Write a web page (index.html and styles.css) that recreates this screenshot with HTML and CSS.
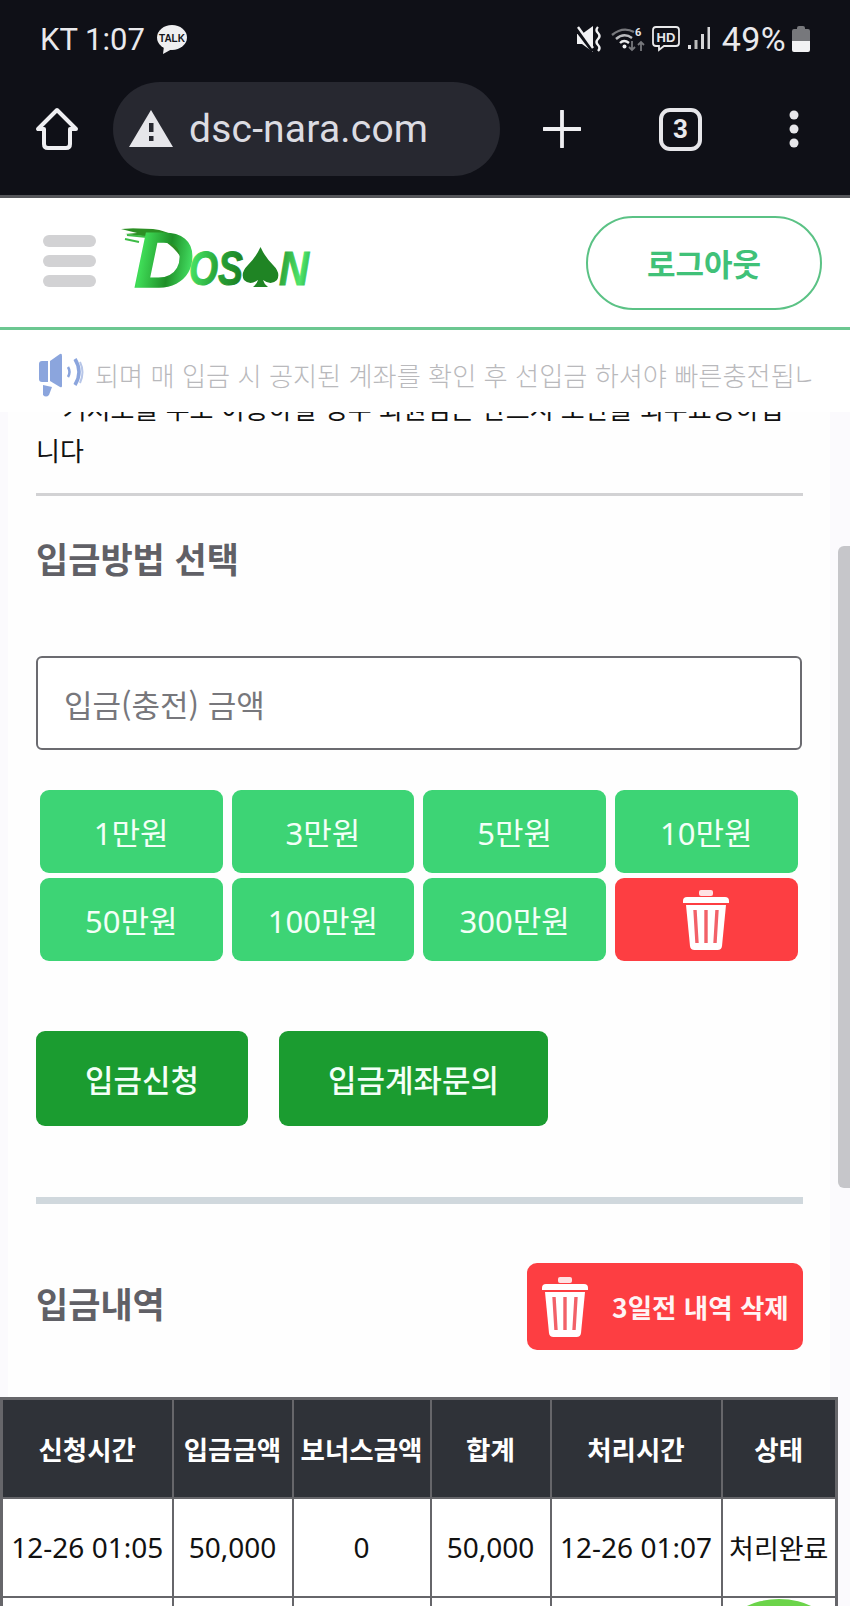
FILE: index.html
```html
<!DOCTYPE html>
<html lang="ko">
<head>
<meta charset="utf-8">
<title>입금 신청</title>
<link rel="stylesheet" href="styles.css">
</head>
<body>
<svg class="defs" width="0" height="0" aria-hidden="true">
  <symbol id="trash" viewBox="0 0 48 60">
    <rect x="17" y="0" width="14" height="6" rx="2" fill="#fff" opacity=".85"/>
    <path d="M1 11q0-4 4-4h38q4 0 4 4v2H1z" fill="#fff"/>
    <path d="M4 15h40l-4 41q-.4 4-4.500 4h-23q-4.100 0-4.500-4z" fill="#fff"/>
    <path d="M13 20l2 33M24 20v33M35 20l-2 33" stroke="#f26168" stroke-width="3.400" fill="none"/>
  </symbol>
</svg>

<div class="device-bar">
  <div class="status">
    <div class="status-left">
      <span>KT 1:07</span>
      <svg class="talk" width="30" height="29" viewBox="0 0 30 29">
        <ellipse cx="15" cy="12.500" rx="15" ry="12.500" fill="#efeff1"/>
        <path d="M7 21l-1 8 9-5z" fill="#efeff1"/>
        <text x="15" y="16.500" text-anchor="middle" class="talk-label">TALK</text>
      </svg>
    </div>
    <div class="status-right">
      <svg width="24" height="26" viewBox="0 0 24 26">
        <path d="M0 8h5l11-8v26L5 18H0z" fill="#f2f2f4"/>
        <path d="M0 4l16 21" stroke="#0f1017" stroke-width="4"/>
        <path d="M1 1l15 21" stroke="#f2f2f4" stroke-width="2.400"/>
        <path d="M21 1q-3 3 0 6t0 6 0 6 0 6" stroke="#f2f2f4" stroke-width="2.400" fill="none"/>
      </svg>
      <svg class="wifi" width="34" height="26" viewBox="0 0 34 26">
        <path d="M1 9q11-9 22-3" stroke="#77787c" stroke-width="2.400" fill="none"/>
        <path d="M5 13q8-7 16-1" stroke="#b9babd" stroke-width="2.400" fill="none"/>
        <path d="M9 17q4-4 9 0" stroke="#e8e8ea" stroke-width="2.400" fill="none"/>
        <circle cx="13.500" cy="20.500" r="2" fill="#f2f2f4"/>
        <text x="24" y="10" class="wifi-gen">6</text>
        <path d="M21 15v9m-3-3l3 3 3-3" stroke="#77787c" stroke-width="1.800" fill="none"/>
        <path d="M30 25v-9m-3 3l3-3 3 3" stroke="#77787c" stroke-width="1.800" fill="none"/>
      </svg>
      <svg class="hd" width="28" height="26" viewBox="0 0 28 26">
        <path d="M4 1h20q3 0 3 3v13q0 3-3 3H12l-5 4v-4H4q-3 0-3-3V4q0-3 3-3z" fill="none" stroke="#e8e8ea" stroke-width="1.800"/>
        <text x="14" y="16" text-anchor="middle" class="hd-label">HD</text>
      </svg>
      <svg class="signal" width="24" height="26" viewBox="0 0 24 26">
        <rect x="1" y="19" width="3" height="4" fill="#e0e0e2"/>
        <rect x="7.500" y="14" width="3" height="9" fill="#bbb"/>
        <rect x="14" y="8" width="3" height="15" fill="#d6d6d8"/>
        <rect x="20.500" y="1" width="2.500" height="22" fill="#d6d6d8"/>
      </svg>
      <span class="battery-pct">49%</span>
      <svg class="battery" width="18" height="26" viewBox="0 0 18 26">
        <path d="M5 2q0-2 2-2h4q2 0 2 2v1h3q2 0 2 2v10H0V5q0-2 2-2h3z" fill="#77787c"/>
        <path d="M0 15h18v9q0 2-2 2H2q-2 0-2-2z" fill="#f2f2f4"/>
      </svg>
    </div>
  </div>
  <div class="toolbar">
    <svg class="home" width="44" height="44" viewBox="0 0 44 44">
      <path d="M22 3L3 22h6v15q0 4 4 4h18q4 0 4-4V22h6z" fill="none" stroke="#efeff2" stroke-width="4" stroke-linejoin="round"/>
    </svg>
    <div class="omnibox">
      <svg width="44" height="38" viewBox="0 0 44 38">
        <path d="M22 0l22 37H0z" fill="#e6e6ea"/>
        <rect x="20" y="13" width="4.500" height="9" fill="#272830"/>
        <rect x="20" y="26" width="4.500" height="5" fill="#272830"/>
      </svg>
      <span class="url">dsc-nara.com</span>
    </div>
    <svg class="plus" width="38" height="38" viewBox="0 0 38 38">
      <path d="M19 1v36M1 19h36" stroke="#efeff2" stroke-width="3.800" stroke-linecap="round"/>
    </svg>
    <span class="tabs">3</span>
    <svg class="kebab" width="10" height="38" viewBox="0 0 10 38">
      <circle cx="5" cy="5" r="4.500" fill="#e6e6ea"/>
      <circle cx="5" cy="19" r="4.500" fill="#e6e6ea"/>
      <circle cx="5" cy="33" r="4.500" fill="#e6e6ea"/>
    </svg>
  </div>
</div>

<header class="site-header">
  <div class="hamburger"><i></i><i></i><i></i></div>
  <svg class="logo" width="210" height="80" viewBox="0 0 210 80">
    <defs>
      <linearGradient id="brush" gradientUnits="userSpaceOnUse" x1="10" y1="0" x2="205" y2="30">
        <stop offset="0" stop-color="#1c8a22"/>
        <stop offset=".14" stop-color="#3fdc57"/>
        <stop offset=".28" stop-color="#1f8f28"/>
        <stop offset=".4" stop-color="#44e063"/>
        <stop offset=".52" stop-color="#2aa83a"/>
        <stop offset=".68" stop-color="#1a7a1f"/>
        <stop offset=".82" stop-color="#23932d"/>
        <stop offset=".95" stop-color="#4fe66c"/>
        <stop offset="1" stop-color="#2eb046"/>
      </linearGradient>
    </defs>
    <path d="M13 13l30 1q26 3 36 24l-9 3q-12-17-29-19l-26-3 12-1-16-4 12-.5z" fill="#2c8f24"/>
    <path d="M15 24l14 3M17 20l20 2" stroke="#3dbb46" stroke-width="2" fill="none"/>
    <text x="24" y="72" class="logo-d" textLength="60" lengthAdjust="spacingAndGlyphs" fill="url(#brush)" stroke="url(#brush)" stroke-width="1.500">D</text>
    <text x="79" y="70" class="logo-os" textLength="54" lengthAdjust="spacingAndGlyphs" fill="url(#brush)" stroke="url(#brush)" stroke-width="1">OS</text>
    <path d="M150.500 32Q155 42 163 50Q171 58 167 65Q161 71 153 65Q154 69 158 72H143Q147 69 148 65Q140 71 134 65Q130 58 138 50Q146 42 150.500 32Z" fill="#1f8424"/>
    <text x="169" y="70" class="logo-n" textLength="30" lengthAdjust="spacingAndGlyphs" fill="url(#brush)" stroke="url(#brush)" stroke-width="1">N</text>
  </svg>
  <a class="logout">로그아웃</a>
</header>

<div class="ticker">
  <svg width="48" height="44" viewBox="0 0 48 44">
    <path d="M1 11q0-3 3-3h6v21H4q-3 0-3-3z" fill="#8ba5dd"/>
    <path d="M12 8l10-7q2-1 2 2v30q0 2-2 1l-10-6z" fill="#8ba5dd"/>
    <path d="M5 32l9 2-3 8q-3 3-6 0z" fill="#8ba5dd"/>
    <path d="M30 14q3 5 0 10" stroke="#8ba5dd" stroke-width="2.500" fill="none"/>
    <path d="M37 6q8 13 0 26" stroke="#8ba5dd" stroke-width="3.500" fill="none"/>
    <path d="M42 9q5 10 0 21" stroke="#b7c6e8" stroke-width="2" fill="none"/>
  </svg>
  <div class="ticker-text"><span>되며 매 입금 시 공지된 계좌를 확인 후 선입금 하셔야 빠른충전됩니다</span></div>
</div>

<main class="page">
  <div class="sheet">
    <p class="notice">*&nbsp; 거처모를 부모 이용하실 경우 회원님은 반드시 보안을 회수요망하십니다</p>
    <hr class="rule">
    <h2 class="method-title">입금방법 선택</h2>
    <div class="amount-input">입금(충전) 금액</div>
    <div class="quick-grid">
      <button class="quick">1만원</button>
      <button class="quick">3만원</button>
      <button class="quick">5만원</button>
      <button class="quick">10만원</button>
      <button class="quick">50만원</button>
      <button class="quick">100만원</button>
      <button class="quick">300만원</button>
      <button class="quick quick-clear"><svg width="48" height="60"><use href="#trash"/></svg></button>
    </div>
    <div class="actions">
      <button class="action action-apply">입금신청</button>
      <button class="action action-ask">입금계좌문의</button>
    </div>
    <hr class="rule-thick">
    <div class="history-head">
      <h2 class="history-title">입금내역</h2>
      <button class="purge"><svg width="48" height="60"><use href="#trash"/></svg><span>3일전 내역 삭제</span></button>
    </div>
  </div>
  <table class="history">
    <colgroup>
      <col class="c1"><col class="c2"><col class="c3"><col class="c4"><col class="c5"><col class="c6">
    </colgroup>
    <thead>
      <tr><th>신청시간</th><th>입금금액</th><th>보너스금액</th><th>합계</th><th>처리시간</th><th>상태</th></tr>
    </thead>
    <tbody>
      <tr><td>12-26 01:05</td><td>50,000</td><td>0</td><td>50,000</td><td>12-26 01:07</td><td class="state">처리완료</td></tr>
      <tr><td></td><td></td><td></td><td></td><td></td><td class="state"><span class="pill"></span></td></tr>
    </tbody>
  </table>
</main>

<div class="scroll-thumb"></div>
</body>
</html>
```
FILE: styles.css
```css
* { box-sizing: border-box; }

html, body {
  margin: 0;
  width: 850px;
  height: 1606px;
  overflow: hidden;
}

body {
  position: relative;
  display: flex;
  flex-direction: column;
  background: #fff;
  font-family: "Noto Sans", "Noto Sans CJK KR", sans-serif;
  color: #111;
}

.defs { position: absolute; }

/* device status bar and browser toolbar */
.device-bar {
  flex: none;
  height: 198px;
  background: #0f1017;
  border-bottom: 3px solid #55565a;
  font-family: Roboto, sans-serif;
  color: #e9e9ec;
}

.status {
  display: flex;
  justify-content: space-between;
  align-items: center;
  height: 78px;
  padding: 0 40px 0 40px;
  font-size: 31px;
}

.status-left, .status-right { display: flex; align-items: center; }
.talk { margin-left: 12px; }
.talk-label { font: 700 10px "Liberation Sans", sans-serif; fill: #15161c; }
.wifi { margin-left: 10px; }
.wifi-gen { font: 700 11px Roboto, sans-serif; fill: #e8e8ea; }
.hd { margin-left: 7px; }
.hd-label { font: 700 13px "Liberation Sans", sans-serif; fill: #e8e8ea; }
.signal { margin-left: 7px; }
.battery-pct { margin-left: 11px; font-size: 34px; letter-spacing: .4px; }
.battery { margin-left: 6px; }

.toolbar {
  display: flex;
  align-items: center;
  height: 117px;
  padding: 0 0 15px 35px;
}

.omnibox {
  display: flex;
  align-items: center;
  width: 387px;
  height: 94px;
  margin-left: 34px;
  padding-left: 16px;
  border-radius: 47px;
  background: #272830;
}

.url {
  margin-left: 16px;
  font-size: 39px;
  color: #dcdce2;
  letter-spacing: .2px;
}

.plus { margin-left: 43px; }

.tabs {
  display: flex;
  align-items: center;
  justify-content: center;
  width: 43px;
  height: 43px;
  margin-left: 78px;
  border: 4px solid #e6e6ea;
  border-radius: 11px;
  font-size: 26px;
  font-weight: 700;
}

.kebab { margin-left: 87px; }

/* site header */
.site-header {
  flex: none;
  display: flex;
  align-items: center;
  height: 132px;
  padding: 0 28px 0 43px;
  border-bottom: 3px solid #6cc791;
  background: #fff;
}

.hamburger {
  display: flex;
  flex-direction: column;
  gap: 8px;
  width: 53px;
  margin-bottom: 4px;
}

.hamburger i {
  height: 12px;
  border-radius: 6px;
  background: #d2d2d4;
}

.logo { margin: 0 0 15px 14px; flex: none; }
.logo-d { font: italic 700 78px "Liberation Sans", sans-serif; }
.logo-os { font: italic 700 49px "Liberation Sans", sans-serif; }
.logo-n { font: italic 700 49px "Liberation Sans", sans-serif; }

.logout {
  display: flex;
  align-items: center;
  justify-content: center;
  width: 236px;
  height: 94px;
  margin-left: auto;
  border: 2.500px solid #5bc285;
  border-radius: 47px;
  font-family: "Noto Sans CJK KR", sans-serif;
  font-size: 31px;
  font-weight: 700;
  color: #40c178;
}

/* scrolling notice */
.ticker {
  flex: none;
  display: flex;
  align-items: center;
  height: 82px;
  padding: 8px 38px 0 38px;
  background: #fff;
}

.ticker-text {
  flex: 1;
  margin-left: 9px;
  overflow: hidden;
  white-space: nowrap;
  font-family: "Noto Sans CJK KR", sans-serif;
  font-size: 26.200px;
  font-weight: 300;
  color: #b9b9bc;
}

/* scrolled page body */
.page {
  flex: 1;
  min-height: 0;
  overflow: hidden;
  background: #fbfafd;
}

.sheet {
  margin: 0 20px 0 8px;
  padding: 0 27px 0 28px;
  background: #fefefe;
}

.notice {
  margin: -25px 0 0;
  font-family: "Noto Sans CJK KR", sans-serif;
  font-size: 26px;
  line-height: 42px;
  color: #111;
}

.rule {
  height: 3px;
  margin: 22px 0 0;
  border: 0;
  background: #d2d2d4;
}

.method-title, .history-title {
  margin: 0;
  font-family: "Noto Sans CJK KR", sans-serif;
  font-size: 35px;
  font-weight: 700;
  line-height: 52px;
  color: #606066;
}

.method-title { padding-top: 36px; }

.amount-input {
  display: flex;
  align-items: center;
  height: 94px;
  margin: 72px 1px 0 0;
  padding-left: 26px;
  border: 2px solid #6b6b70;
  border-radius: 6px;
  background: #fff;
  font-family: "Noto Sans CJK KR", sans-serif;
  font-size: 31px;
  color: #77777c;
}

.quick-grid {
  display: grid;
  grid-template-columns: repeat(4, 182.500px);
  grid-auto-rows: 83px;
  gap: 5px 9.200px;
  margin: 40px 0 0 4px;
}

button {
  padding: 0;
  border: 0;
  font-family: "Noto Sans", "Noto Sans CJK KR", sans-serif;
  color: #f3fff7;
}

.quick {
  display: flex;
  align-items: center;
  justify-content: center;
  border-radius: 9px;
  background: #3dd475;
  font-size: 31px;
}

.quick-clear { background: #fd3e42; }

.actions {
  display: flex;
  gap: 31px;
  margin-top: 70px;
}

.action {
  height: 95px;
  border-radius: 9px;
  background: #1b9c30;
  font-family: "Noto Sans CJK KR", sans-serif;
  font-size: 31px;
  font-weight: 500;
}

.action-apply { width: 212px; }
.action-ask { width: 269px; }

.rule-thick {
  height: 7px;
  margin: 71px 0 0;
  border: 0;
  background: #d0d8dd;
}

.history-head {
  display: flex;
  justify-content: space-between;
  align-items: center;
  margin-top: 59px;
  padding-bottom: 47px;
}

.history-title { margin-bottom: 8px; }

.purge {
  display: flex;
  align-items: center;
  width: 276px;
  height: 87px;
  padding-left: 14px;
  border-radius: 10px;
  background: #fd3e42;
  font-family: "Noto Sans CJK KR", sans-serif;
  font-size: 26.500px;
  font-weight: 700;
  color: #fff4f4;
}

.purge span { margin-left: 23px; white-space: nowrap; }

/* deposit history table */
.history {
  width: 835px;
  margin-left: 0;
  border-collapse: collapse;
  table-layout: fixed;
  background: #fff;
  border: 3px solid #66666a;
}

.c1 { width: 171px; }
.c2 { width: 120px; }
.c3 { width: 138px; }
.c4 { width: 120px; }
.c5 { width: 171px; }
.c6 { width: 115px; }

.history th, .history td {
  height: 99px;
  padding: 0;
  border: 2.500px solid #66666a;
  text-align: center;
  vertical-align: middle;
  white-space: nowrap;
}

.history th {
  background: #2f3238;
  font-family: "Noto Sans CJK KR", sans-serif;
  font-size: 26.500px;
  font-weight: 700;
  color: #fff;
}

.history td { font-size: 28px; color: #111; }

.history td.state {
  font-family: "Noto Sans CJK KR", sans-serif;
  font-size: 27px;
}

.pill {
  display: block;
  width: 100px;
  height: 60px;
  margin: -33px auto 0;
  border-radius: 50%;
  background: #6cd44a;
}

/* overlay scrollbar */
.scroll-thumb {
  position: absolute;
  top: 546px;
  right: 0;
  width: 12px;
  height: 642px;
  border-radius: 6px 0 0 6px;
  background: #c6c6ca;
}
```
